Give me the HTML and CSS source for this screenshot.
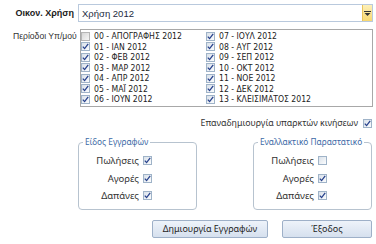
FILE: index.html
```html
<!DOCTYPE html>
<html lang="el">
<head>
    <meta charset="UTF-8">
    <meta name="viewport" content="width=device-width, initial-scale=1.0">
    <title>Δημιουργία Εγγραφών</title>
    <link rel="stylesheet" href="styles.css">
</head>
<body>

    <div class="form">

        <div class="year-row">
            <label class="year-label">Οικον. Χρήση</label>
            <div class="combo">
                <span class="combo-text">Χρήση 2012</span>
                <span class="combo-btn">
                    <svg width="7" height="5" viewBox="0 0 7 5"><rect x="0" y="0" width="7" height="1" fill="#333"/><path d="M0.5 2 L6.5 2 L3.5 5 Z" fill="#333"/></svg>
                </span>
            </div>
        </div>

        <div class="period-row">
            <label class="period-label">Περίοδοι Υπ/μού</label>
            <div class="period-list" id="periodList"></div>
        </div>

        <div class="recreate-row">
            <span>Επαναδημιουργία υπαρκτών κινήσεων</span>
            <span class="cb on"></span>
        </div>

        <div class="groups">
            <fieldset class="group">
                <legend>Είδος Εγγραφών</legend>
                <div class="opts">
                    <div class="opt"><span>Πωλήσεις</span><span class="cb on"></span></div>
                    <div class="opt"><span>Αγορές</span><span class="cb on"></span></div>
                    <div class="opt"><span>Δαπάνες</span><span class="cb on"></span></div>
                </div>
            </fieldset>
            <fieldset class="group">
                <legend>Εναλλακτικό Παραστατικό</legend>
                <div class="opts">
                    <div class="opt"><span>Πωλήσεις</span><span class="cb"></span></div>
                    <div class="opt"><span>Αγορές</span><span class="cb on"></span></div>
                    <div class="opt"><span>Δαπάνες</span><span class="cb on"></span></div>
                </div>
            </fieldset>
        </div>

        <div class="actions">
            <button class="btn btn-create">Δημιουργία Εγγραφών</button>
            <button class="btn btn-exit">Έξοδος</button>
        </div>

    </div>

    <script>
        const periods = [
            '00 - ΑΠΟΓΡΑΦΗΣ 2012', '01 - ΙΑΝ 2012', '02 - ΦΕΒ 2012', '03 - ΜΑΡ 2012',
            '04 - ΑΠΡ 2012', '05 - ΜΑΪ 2012', '06 - ΙΟΥΝ 2012', '07 - ΙΟΥΛ 2012',
            '08 - ΑΥΓ 2012', '09 - ΣΕΠ 2012', '10 - ΟΚΤ 2012', '11 - ΝΟΕ 2012',
            '12 - ΔΕΚ 2012', '13 - ΚΛΕΙΣΙΜΑΤΟΣ 2012'
        ];

        const tick = '<svg width="7" height="7" viewBox="0 0 7 7"><path d="M0.8 3.6 L2.6 5.6 L6.2 0.9" fill="none" stroke="#27418c" stroke-width="1.3"/></svg>';

        // checked boxes get the tick
        document.querySelectorAll('.cb.on').forEach(cb => cb.innerHTML = tick);

        const list = document.getElementById('periodList');
        periods.forEach((name, index) => {
            const item = document.createElement('div');
            item.className = 'period-item';
            const checked = index > 0;
            item.innerHTML = `<span class="cb ${checked ? 'on' : 'off'}">${checked ? tick : ''}</span><span>${name}</span>`;
            list.appendChild(item);
        });
    </script>

</body>
</html>
```

FILE: styles.css
```css
body {
    margin: 0;
    background: #fff;
    font-family: "Liberation Sans", Arial, sans-serif;
    font-size: 9px;
    color: #1e1e1e;
}

.form {
    width: 376px;
    height: 244px;
    padding-top: 4px;
    box-sizing: border-box;
}

.year-row {
    display: flex;
    align-items: center;
    height: 18px;
}

.year-label {
    width: 74px;
    text-align: right;
    font-weight: bold;
    font-size: 9px;
    color: #202020;
}

.combo {
    margin-left: 4px;
    width: 295px;
    height: 18px;
    box-sizing: border-box;
    border: 1px solid #b9c9dd;
    display: flex;
    align-items: center;
    justify-content: space-between;
}

.combo-text {
    padding-left: 3px;
    font-size: 9.5px;
    color: #1a2a40;
}

.combo-btn {
    width: 10px;
    height: 16px;
    box-sizing: border-box;
    border-left: 1px solid #e9c45c;
    background: linear-gradient(#fdf0b8, #f8d870);
    display: flex;
    align-items: center;
    justify-content: center;
}

.period-row {
    display: flex;
    margin-top: 7px;
}

.period-label {
    width: 67px;
    padding-left: 13px;
    padding-top: 2px;
    white-space: nowrap;
    font-size: 8.6px;
    color: #333;
}

.period-list {
    width: 293px;
    height: 78px;
    box-sizing: border-box;
    border: 1px solid #a8a8a8;
    display: grid;
    grid-template-columns: 125px 1fr;
    grid-template-rows: repeat(7, 10.5px);
    grid-auto-flow: column;
    padding-top: 1px;
}

.period-item {
    display: flex;
    align-items: center;
    gap: 4px;
    font-family: "Liberation Sans Narrow", "DejaVu Sans Condensed", sans-serif;
    font-size: 8.6px;
    color: #222;
    white-space: nowrap;
}

.cb {
    width: 9px;
    height: 9px;
    box-sizing: border-box;
    border: 1px solid #9fb3c8;
    background: linear-gradient(135deg, #d9e1ea, #fbfcfd);
    display: inline-flex;
    align-items: center;
    justify-content: center;
    flex-shrink: 0;
}

.cb.off {
    border-color: #b5b5b5;
    background: linear-gradient(135deg, #d6d6d6, #f6f6f6);
}

.recreate-row {
    display: flex;
    justify-content: flex-end;
    align-items: center;
    gap: 5px;
    margin-top: 10px;
    padding-right: 4px;
    font-family: "Noto Sans", sans-serif;
    font-size: 8.8px;
    color: #333;
}

.groups {
    display: flex;
    gap: 56px;
    padding-left: 78px;
    margin-top: 7px;
}

.group {
    width: 119px;
    box-sizing: border-box;
    margin: 0;
    padding: 0;
    border: 1px solid #b7c3cf;
    border-radius: 4px;
    font-family: "Noto Sans", sans-serif;
    color: #333;
}

.group legend {
    margin-left: 4px;
    padding: 0 2px;
    color: #3d6aa6;
    font-size: 8.3px;
    line-height: 12px;
    white-space: nowrap;
}

.opts {
    display: flex;
    flex-direction: column;
    align-items: flex-end;
    padding: 4px 44px 4px 0;
}

.opt {
    display: flex;
    align-items: center;
    gap: 4px;
    height: 17.5px;
    font-size: 9.5px;
}

.actions {
    display: flex;
    gap: 14px;
    padding-left: 152px;
    margin-top: 10px;
}

.btn {
    height: 18px;
    border: 1px solid #9eb0c8;
    border-radius: 2px;
    background: linear-gradient(#eef3fa, #d6e0ee);
    font-family: "Noto Sans", sans-serif;
    font-size: 9px;
    color: #1e1e1e;
    padding: 0;
}

.btn-create {
    width: 116px;
}

.btn-exit {
    width: 90px;
}
```
